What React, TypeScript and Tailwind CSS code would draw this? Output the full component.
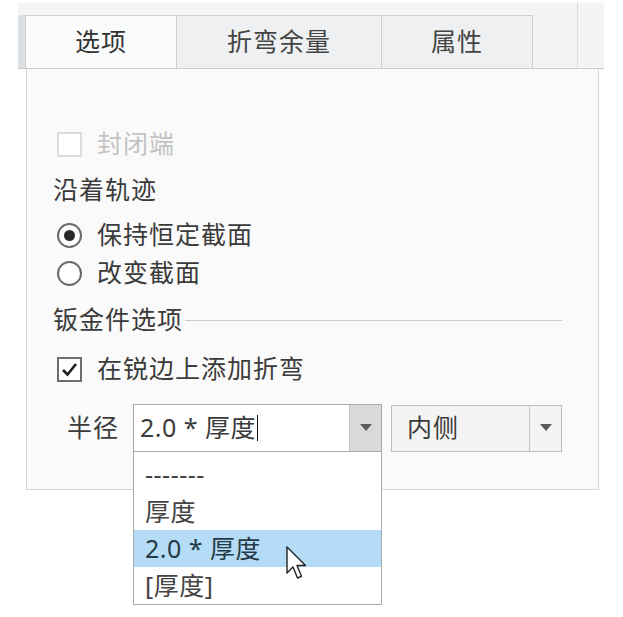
import { useState } from "react";

function Checkbox({ checked, disabled }: { checked?: boolean; disabled?: boolean }) {
  return (
    <div
      className={`w-[25px] h-[25px] border-2 flex items-center justify-center bg-white ${
        disabled ? "border-[#dcdcdc] bg-[#f7f7f7]" : "border-[#6e6e6e]"
      }`}
    >
      {checked && (
        <svg width="17" height="15" viewBox="0 0 17 15">
          <path d="M2 8 L6.5 12.5 L15 2" fill="none" stroke="#222" strokeWidth="2.6" />
        </svg>
      )}
    </div>
  );
}

function Radio({ checked }: { checked?: boolean }) {
  return (
    <div className="w-[25px] h-[25px] rounded-full border-2 border-[#6a6a6a] bg-white flex items-center justify-center">
      {checked && <div className="w-[11px] h-[11px] rounded-full bg-[#2a2a2a]" />}
    </div>
  );
}

function Arrow() {
  return (
    <svg width="12" height="8" viewBox="0 0 12 8">
      <path d="M0 0 H12 L6 7 Z" fill="#5a5a5a" />
    </svg>
  );
}

function App() {
  const [tab] = useState(0);
  const tabs = [
    { label: "选项", w: "w-[152px]" },
    { label: "折弯余量", w: "w-[205px]" },
    { label: "属性", w: "w-[151px]" },
  ];
  const items = ["-------", "厚度", "2.0 * 厚度", "[厚度]"];

  return (
    <div className="w-[623px] h-[617px] bg-white relative overflow-hidden text-[25px] tracking-[1px] text-[#3b3b3b] font-['Noto_Sans','Noto_Sans_CJK_SC',sans-serif]">
      {/* tab strip */}
      <div className="ml-[18px] mt-[3px] w-[586px] h-[66px] bg-[#f3f4f5] border-b border-[#c9cccf] flex items-end">
        <div className="w-[7px] h-[53px] bg-[#dde0e2]" />
        {tabs.map((t, i) => (
          <div
            key={t.label}
            className={`${t.w} h-[53px] border-t border-r border-[#cdd0d3] flex items-center justify-center leading-none ${
              i === tab ? "border-l bg-[#fafbfb] text-[#333]" : "bg-[#eef0f1] text-[#444]"
            }`}
          >
            <span className="-mt-[2px]">{t.label}</span>
          </div>
        ))}
        <div className="w-[44px]" />
        <div className="w-px h-[66px] bg-[#dadcde]" />
      </div>

      {/* panel */}
      <div className="ml-[26px] w-[573px] h-[421px] bg-[#fafafa] border border-t-0 border-[#d6d6d6] pl-[26px] pt-[56px]">
        <div className="h-[38px] flex items-center">
          <div className="ml-[4px]">
            <Checkbox disabled />
          </div>
          <span className="ml-[15px] text-[#c3c3c3]">封闭端</span>
        </div>
        <div className="h-[38px] mt-[8px] flex items-center">沿着轨迹</div>
        <div className="h-[38px] mt-[7px] flex items-center">
          <div className="ml-[4px]">
            <Radio checked />
          </div>
          <span className="ml-[15px]">保持恒定截面</span>
        </div>
        <div className="h-[38px] flex items-center">
          <div className="ml-[4px]">
            <Radio />
          </div>
          <span className="ml-[15px]">改变截面</span>
        </div>
        <div className="h-[38px] mt-[9px] flex items-center w-[509px]">
          <span>钣金件选项</span>
          <div className="flex-1 h-px bg-[#cacaca] ml-[2px]" />
        </div>
        <div className="h-[38px] mt-[11px] flex items-center">
          <div className="ml-[4px]">
            <Checkbox checked />
          </div>
          <span className="ml-[15px]">在锐边上添加折弯</span>
        </div>
        <div className="mt-[16px] flex items-center">
          <span className="ml-[14px] w-[66px]">半径</span>
          <div className="relative w-[249px] h-[48px] border border-[#a9a9a9] bg-white flex">
            <div className="flex-1 flex items-center pl-[6px] tracking-[0.5px]">
              <span>2.0 * 厚度</span>
              <div className="w-px h-[26px] bg-[#111] ml-[1px]" />
            </div>
            <div className="w-[32px] bg-[#d9d9d9] border-l border-[#c4c4c4] flex items-center justify-center">
              <Arrow />
            </div>
            {/* dropdown list */}
            <div className="absolute left-[-1px] top-[46px] w-[249px] h-[154px] border border-[#a9a9a9] bg-white pt-[4px] z-10">
              {items.map((it, i) => (
                <div
                  key={it}
                  className={`h-[37px] flex items-center pl-[11px] tracking-[0.5px] ${
                    i === 2 ? "bg-[#b4dcf6] text-[#263a46]" : "text-[#444]"
                  }`}
                >
                  {it}
                </div>
              ))}
            </div>
          </div>
          <div className="ml-[9px] w-[171px] h-[47px] border border-[#bdbdbd] bg-[#f4f4f4] flex">
            <div className="flex-1 flex items-center pl-[15px]">内侧</div>
            <div className="w-[32px] border-l border-[#c4c4c4] flex items-center justify-center">
              <Arrow />
            </div>
          </div>
        </div>
      </div>

      {/* mouse pointer */}
      <svg
        className="absolute left-[286px] top-[546px] z-20"
        width="22"
        height="35"
        viewBox="0 0 22 35"
      >
        <path
          d="M1 1 L1 27 L7 21 L11.5 32 L15.5 30.3 L11 19.5 L19.5 19.5 Z"
          fill="#fff"
          stroke="#222"
          strokeWidth="1.4"
          strokeLinejoin="round"
        />
      </svg>
    </div>
  );
}

export default App;
